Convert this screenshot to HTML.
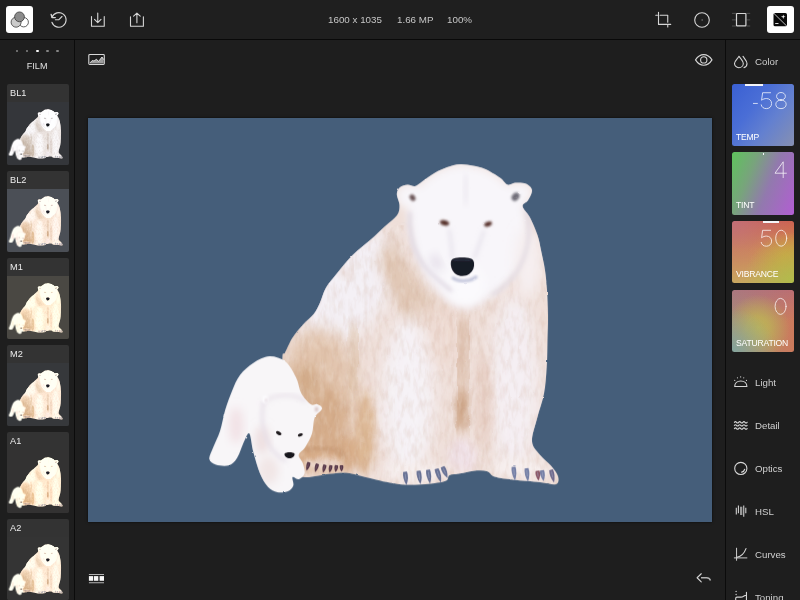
<!DOCTYPE html>
<html>
<head>
<meta charset="utf-8">
<title>Photo Editor</title>
<style>
*{margin:0;padding:0;box-sizing:border-box}
html,body{width:800px;height:600px;overflow:hidden;background:#1e1e1e;font-family:"Liberation Sans",sans-serif;color:#d8d8d8}
.abs{position:absolute}
.info,.nav,#film,.lbl{will-change:transform}
#app{position:relative;width:800px;height:600px;background:#1e1e1e;overflow:hidden}
#topbar{left:0;top:0;width:800px;height:39px;background:#1f1f1f}
#topline{left:0;top:39px;width:800px;height:1px;background:#090909}
#leftline{left:74px;top:40px;width:1px;height:560px;background:#0b0b0b}
#rightline{left:725px;top:40px;width:1px;height:560px;background:#0b0b0b}
.btn-active{background:#fefefe;border-radius:3px;width:27px;height:27px;top:6.25px}
svg{position:absolute;overflow:visible}
.ic{fill:none;stroke:#d6d6d6;stroke-width:1.1;stroke-linecap:round;stroke-linejoin:round}
.info{top:13.3px;font-size:9.8px;color:#c6c6c6;white-space:nowrap;line-height:13px}
#film{left:0;width:74.3px;top:59.65px;text-align:center;font-size:9.1px;color:#e0e0e0;line-height:12px}
.dot{width:2.2px;height:2.2px;border-radius:50%;background:#858585;top:49.9px}
.thumb{left:6.7px;width:62.25px;height:80.6px;background:#333333;border-radius:2px;overflow:hidden}
.thumb .lbl{position:absolute;left:3px;top:3.15px;font-size:9.2px;line-height:12px;color:#ececec}
.thumb .pic{position:absolute;left:0;top:18.3px;width:62.25px;height:62.3px;overflow:hidden}
.thumb .pic svg{left:-17px;top:0;width:96.3px;height:62.3px}
.tile{left:732px;width:62.2px;height:62.4px;border-radius:2.5px;overflow:hidden}
.tile .lbl{position:absolute;left:4.4px;bottom:4.5px;font-size:8.6px;line-height:10px;color:#fff;letter-spacing:-0.2px;white-space:nowrap}
.tile .ind{position:absolute;top:0;height:2px;background:#f4f4f8}
.nav{left:754.700px;font-size:9.7px;color:#cfcfcf;line-height:13px;white-space:nowrap}
#photo{left:88px;top:117.5px;width:624.1px;height:404px;background:#455e7a;box-shadow:0 0 2.5px rgba(0,0,0,.75)}
</style>
</head>
<body>
<div id="app">
<svg width="0" height="0" style="position:absolute"><defs>

<clipPath id="mclip"><path d="M460.0 164.0C464.3 163.8 468.8 164.7 473.0 165.5C477.2 166.3 480.5 166.8 485.0 168.8C489.5 170.8 496.2 174.9 500.0 177.5C503.8 180.1 505.0 183.7 507.5 184.5C510.0 185.3 511.9 182.7 515.0 182.5C518.1 182.3 523.2 182.2 526.0 183.5C528.8 184.8 531.7 187.2 532.0 190.0C532.3 192.8 529.6 197.3 528.0 200.0C526.4 202.7 522.2 203.1 522.5 206.0C522.8 208.9 527.5 212.7 530.0 217.5C532.5 222.3 535.7 229.6 537.5 235.0C539.3 240.4 539.8 244.2 541.0 250.0C542.2 255.8 544.0 263.3 545.0 270.0C546.0 276.7 546.5 282.5 547.0 290.0C547.5 297.5 547.9 306.7 548.0 315.0C548.1 323.3 547.7 331.4 547.5 340.0C547.3 348.6 547.3 357.8 546.7 366.7C546.1 375.6 545.6 384.9 544.0 393.3C542.4 401.7 539.3 409.3 537.3 417.3C535.3 425.3 531.5 435.1 532.0 441.3C532.5 447.5 536.9 450.7 540.0 454.7C543.1 458.7 547.7 461.8 550.7 465.3C553.7 468.9 557.1 472.9 558.0 476.0C558.9 479.1 559.0 483.0 556.0 484.0C553.0 485.0 547.1 482.8 540.0 482.0C532.9 481.2 520.8 480.4 513.3 479.5C505.7 478.6 499.1 477.9 494.7 476.5C490.3 475.1 490.3 472.0 486.7 471.0C483.1 470.0 477.8 470.3 473.3 470.7C468.9 471.1 464.0 472.6 460.0 473.3C456.0 474.0 451.8 473.8 449.5 475.0C447.2 476.2 449.2 479.1 446.0 480.5C442.8 481.9 436.7 482.8 430.0 483.5C423.3 484.2 412.7 484.7 406.0 484.5C399.3 484.3 395.0 483.3 390.0 482.5C385.0 481.7 381.0 480.7 376.0 479.5C371.0 478.3 365.0 476.7 360.0 475.5C355.0 474.3 351.0 472.8 346.0 472.5C341.0 472.2 336.8 472.8 330.0 473.5C323.2 474.2 310.7 477.6 305.0 477.0C299.3 476.4 298.8 476.2 296.0 470.0C293.2 463.8 290.2 451.7 288.0 440.0C285.8 428.3 283.9 413.8 283.0 400.0C282.1 386.2 282.2 365.4 282.5 357.5C282.8 349.6 283.3 355.8 285.0 352.5C286.7 349.2 289.6 342.1 292.5 337.5C295.4 332.9 299.0 329.0 302.5 325.0C306.0 321.0 310.8 317.5 313.8 313.8C316.7 310.0 318.0 306.9 320.0 302.5C322.0 298.1 323.1 292.5 326.0 287.5C328.9 282.5 333.1 277.9 337.5 272.5C341.9 267.1 347.1 260.4 352.5 255.0C357.9 249.6 364.6 244.8 370.0 240.0C375.4 235.2 380.5 230.2 385.0 226.0C389.5 221.8 394.6 218.5 397.0 215.0C399.4 211.5 399.5 208.5 399.5 205.0C399.5 201.5 396.7 196.8 396.8 193.8C396.8 190.8 398.2 188.5 400.0 187.0C401.8 185.5 405.0 184.7 407.5 184.5C410.0 184.3 412.5 186.6 415.0 186.0C417.5 185.4 419.2 183.2 422.5 181.0C425.8 178.8 430.9 174.8 435.0 172.5C439.1 170.2 442.8 168.4 447.0 167.0C451.2 165.6 455.7 164.2 460.0 164.0Z"/></clipPath>
<clipPath id="cclip"><path d="M269.3 356.0C264.0 356.2 258.2 359.6 253.3 362.7C248.4 365.8 243.6 370.0 240.0 374.7C236.4 379.4 234.4 384.9 232.0 390.7C229.6 396.5 227.3 402.6 225.3 409.3C223.3 416.0 222.0 424.5 220.0 430.7C218.0 436.9 215.1 442.0 213.3 446.7C211.5 451.4 208.9 455.7 209.3 458.7C209.8 461.7 212.7 463.4 216.0 464.5C219.3 465.6 225.8 466.2 229.3 465.0C232.9 463.8 234.9 461.2 237.3 457.3C239.8 453.4 242.0 445.3 244.0 441.3C246.0 437.3 247.8 431.5 249.3 433.3C250.9 435.1 251.5 445.3 253.3 452.0C255.1 458.7 257.6 467.5 260.0 473.3C262.4 479.1 265.1 483.6 268.0 486.7C270.9 489.8 274.0 491.3 277.3 492.0C280.6 492.7 285.3 492.1 288.0 491.0C290.7 489.9 292.6 487.6 293.3 485.3C294.1 483.0 291.6 478.1 292.5 477.0C293.4 475.9 296.7 479.6 298.7 479.0C300.7 478.4 303.8 476.0 304.5 473.3C305.2 470.6 303.7 465.8 302.7 462.7C301.7 459.6 298.3 457.4 298.7 454.7C299.1 452.0 303.1 450.3 305.3 446.7C307.5 443.1 310.4 438.2 312.0 433.3C313.6 428.4 313.0 421.4 314.7 417.3C316.4 413.2 321.6 410.7 322.0 408.5C322.4 406.3 319.2 404.8 317.3 404.0C315.4 403.2 313.4 405.8 310.7 404.0C308.0 402.2 303.8 397.8 301.3 393.3C298.9 388.9 298.7 382.6 296.0 377.3C293.3 372.0 289.8 364.9 285.3 361.3C280.9 357.8 274.6 355.8 269.3 356.0Z"/></clipPath>
<filter id="b1" x="-30%" y="-30%" width="160%" height="160%"><feGaussianBlur stdDeviation="0.8"/></filter>
<filter id="b2" x="-30%" y="-30%" width="160%" height="160%"><feGaussianBlur stdDeviation="2"/></filter>
<filter id="b4" x="-30%" y="-30%" width="160%" height="160%"><feGaussianBlur stdDeviation="4"/></filter>
<filter id="b6" x="-40%" y="-40%" width="180%" height="180%"><feGaussianBlur stdDeviation="6"/></filter>
<filter id="b8" x="-40%" y="-40%" width="180%" height="180%"><feGaussianBlur stdDeviation="8"/></filter>
<filter id="b12" x="-50%" y="-50%" width="200%" height="200%"><feGaussianBlur stdDeviation="12"/></filter>
<filter id="fur" x="-3%" y="-3%" width="106%" height="106%">
  <feTurbulence type="fractalNoise" baseFrequency="0.09 0.05" numOctaves="2" seed="7" result="n"/>
  <feDisplacementMap in="SourceGraphic" in2="n" scale="7" xChannelSelector="R" yChannelSelector="G" result="d"/>
  <feGaussianBlur in="d" stdDeviation="0.45"/>
</filter>
<filter id="tex" x="0" y="0" width="100%" height="100%" color-interpolation-filters="sRGB">
  <feTurbulence type="fractalNoise" baseFrequency="0.22 0.07" numOctaves="3" seed="11" result="n"/>
  <feColorMatrix in="n" type="matrix" values="0 0 0 0 0.72  0 0 0 0 0.52  0 0 0 0 0.40  2.6 0 0 0 -1.12" result="c"/>
  <feComposite in="c" in2="SourceGraphic" operator="in"/>
</filter>
<filter id="tex2" x="0" y="0" width="100%" height="100%" color-interpolation-filters="sRGB">
  <feTurbulence type="fractalNoise" baseFrequency="0.2 0.08" numOctaves="3" seed="23" result="n"/>
  <feColorMatrix in="n" type="matrix" values="0 0 0 0 1  0 0 0 0 1  0 0 0 0 1  2.6 0 0 0 -1.15" result="c"/>
  <feComposite in="c" in2="SourceGraphic" operator="in"/>
</filter>
<filter id="edge" x="-3%" y="-3%" width="106%" height="106%">
  <feTurbulence type="fractalNoise" baseFrequency="0.22" numOctaves="1" seed="3" result="n"/>
  <feDisplacementMap in="SourceGraphic" in2="n" scale="2.0" xChannelSelector="R" yChannelSelector="G" result="d"/>
  <feGaussianBlur in="d" stdDeviation="0.55"/>
</filter>
<symbol id="bears" viewBox="88 117.75 624 403.65" preserveAspectRatio="none" overflow="visible">
  <g filter="url(#edge)">
  <path d="M460.0 164.0C464.3 163.8 468.8 164.7 473.0 165.5C477.2 166.3 480.5 166.8 485.0 168.8C489.5 170.8 496.2 174.9 500.0 177.5C503.8 180.1 505.0 183.7 507.5 184.5C510.0 185.3 511.9 182.7 515.0 182.5C518.1 182.3 523.2 182.2 526.0 183.5C528.8 184.8 531.7 187.2 532.0 190.0C532.3 192.8 529.6 197.3 528.0 200.0C526.4 202.7 522.2 203.1 522.5 206.0C522.8 208.9 527.5 212.7 530.0 217.5C532.5 222.3 535.7 229.6 537.5 235.0C539.3 240.4 539.8 244.2 541.0 250.0C542.2 255.8 544.0 263.3 545.0 270.0C546.0 276.7 546.5 282.5 547.0 290.0C547.5 297.5 547.9 306.7 548.0 315.0C548.1 323.3 547.7 331.4 547.5 340.0C547.3 348.6 547.3 357.8 546.7 366.7C546.1 375.6 545.6 384.9 544.0 393.3C542.4 401.7 539.3 409.3 537.3 417.3C535.3 425.3 531.5 435.1 532.0 441.3C532.5 447.5 536.9 450.7 540.0 454.7C543.1 458.7 547.7 461.8 550.7 465.3C553.7 468.9 557.1 472.9 558.0 476.0C558.9 479.1 559.0 483.0 556.0 484.0C553.0 485.0 547.1 482.8 540.0 482.0C532.9 481.2 520.8 480.4 513.3 479.5C505.7 478.6 499.1 477.9 494.7 476.5C490.3 475.1 490.3 472.0 486.7 471.0C483.1 470.0 477.8 470.3 473.3 470.7C468.9 471.1 464.0 472.6 460.0 473.3C456.0 474.0 451.8 473.8 449.5 475.0C447.2 476.2 449.2 479.1 446.0 480.5C442.8 481.9 436.7 482.8 430.0 483.5C423.3 484.2 412.7 484.7 406.0 484.5C399.3 484.3 395.0 483.3 390.0 482.5C385.0 481.7 381.0 480.7 376.0 479.5C371.0 478.3 365.0 476.7 360.0 475.5C355.0 474.3 351.0 472.8 346.0 472.5C341.0 472.2 336.8 472.8 330.0 473.5C323.2 474.2 310.7 477.6 305.0 477.0C299.3 476.4 298.8 476.2 296.0 470.0C293.2 463.8 290.2 451.7 288.0 440.0C285.8 428.3 283.9 413.8 283.0 400.0C282.1 386.2 282.2 365.4 282.5 357.5C282.8 349.6 283.3 355.8 285.0 352.5C286.7 349.2 289.6 342.1 292.5 337.5C295.4 332.9 299.0 329.0 302.5 325.0C306.0 321.0 310.8 317.5 313.8 313.8C316.7 310.0 318.0 306.9 320.0 302.5C322.0 298.1 323.1 292.5 326.0 287.5C328.9 282.5 333.1 277.9 337.5 272.5C341.9 267.1 347.1 260.4 352.5 255.0C357.9 249.6 364.6 244.8 370.0 240.0C375.4 235.2 380.5 230.2 385.0 226.0C389.5 221.8 394.6 218.5 397.0 215.0C399.4 211.5 399.5 208.5 399.5 205.0C399.5 201.5 396.7 196.8 396.8 193.8C396.8 190.8 398.2 188.5 400.0 187.0C401.8 185.5 405.0 184.7 407.5 184.5C410.0 184.3 412.5 186.6 415.0 186.0C417.5 185.4 419.2 183.2 422.5 181.0C425.8 178.8 430.9 174.8 435.0 172.5C439.1 170.2 442.8 168.4 447.0 167.0C451.2 165.6 455.7 164.2 460.0 164.0Z" fill="#efdfd9"/>
  <g clip-path="url(#mclip)">
   <g filter="url(#fur)">
    <!-- shoulder / back white -->
    <ellipse cx="350" cy="290" rx="37" ry="68" fill="#f4f0f5" filter="url(#b8)" transform="rotate(38 350 290)"/>
    <ellipse cx="347" cy="273" rx="6" ry="5" fill="#e8d8d4" filter="url(#b4)"/>
    <!-- thigh tan -->
    <ellipse cx="318" cy="398" rx="40" ry="70" fill="#e2c5ae" filter="url(#b8)"/>
    <ellipse cx="306" cy="385" rx="12" ry="22" fill="#d4ae8c" filter="url(#b6)"/>
    <ellipse cx="328" cy="452" rx="44" ry="20" fill="#d8ae8a" filter="url(#b6)"/>
    <path d="M352 326C358 345 357 365 350 392" stroke="#d9bb9e" stroke-width="5" fill="none" filter="url(#b4)"/>
    <ellipse cx="326" cy="420" rx="20" ry="34" fill="#d6ae8c" filter="url(#b6)"/>
    <path d="M303 452C312 446 334 447 346 458" stroke="#c89a74" stroke-width="4" fill="none" filter="url(#b2)"/>
    <ellipse cx="324" cy="464" rx="20" ry="6" fill="#ecd6c8" filter="url(#b2)"/>
    <!-- neck cream -->
    <path d="M394 232C402 262 422 292 450 312L430 336C402 322 384 290 378 256Z" fill="#e1c8b6" filter="url(#b6)"/>
    <!-- chest -->
    <ellipse cx="440" cy="335" rx="26" ry="34" fill="#eedad2" filter="url(#b8)"/>
    <!-- left front leg white -->
    <ellipse cx="408" cy="398" rx="26" ry="82" fill="#f6f2f6" filter="url(#b8)"/>
    <ellipse cx="365" cy="432" rx="9" ry="42" fill="#ddb894" filter="url(#b4)"/>
    <!-- center seam tan -->
    <path d="M466 318C460 350 458 390 462 432" stroke="#dfc2b0" stroke-width="16" fill="none" filter="url(#b6)"/>
    <ellipse cx="462" cy="408" rx="6" ry="18" fill="#cda586" filter="url(#b4)"/>
    <ellipse cx="462" cy="455" rx="14" ry="16" fill="#f1e2e8" filter="url(#b4)"/>
    <!-- right leg -->
    <ellipse cx="514" cy="385" rx="24" ry="92" fill="#f5eff3" filter="url(#b8)"/>
    <ellipse cx="484" cy="400" rx="8" ry="50" fill="#e8d0c6" filter="url(#b4)"/>
    <!-- paws lighter -->
    <ellipse cx="415" cy="472" rx="32" ry="10" fill="#f7efee" filter="url(#b4)"/>
    <ellipse cx="522" cy="468" rx="32" ry="11" fill="#f7efee" filter="url(#b4)"/>
   </g>
    <!-- fur texture -->
    <rect x="280" y="225" width="280" height="262" fill="#000" filter="url(#tex)" opacity=".13"/>
    <rect x="280" y="225" width="280" height="262" fill="#000" filter="url(#tex2)" opacity=".16"/>
    <!-- head -->
    <path d="M414 210C410 240 424 274 448 294C458 306 474 306 484 294C512 276 532 244 528 210Z" fill="none" stroke="#e3d8dc" stroke-width="6" filter="url(#b4)"/>
    <path d="M396 196C394 186 410 180 418 186C432 170 452 163 466 164C488 166 502 178 508 185C518 180 534 182 532 192C532 200 524 204 523 207C530 226 530 250 516 272C506 288 490 296 484 300C476 308 456 308 448 300C430 288 414 262 410 232C408 222 408 214 408 208C400 208 396 202 396 196Z" fill="#f8f6fa" filter="url(#b4)"/>
    <ellipse cx="465" cy="284" rx="20" ry="22" fill="#fbfafd" filter="url(#b4)"/>
    <!-- right shoulder white -->
    <ellipse cx="528" cy="262" rx="14" ry="36" fill="#f6eff0" filter="url(#b6)"/>
    <!-- cheek contours -->
    <path d="M410 212C408 236 416 258 430 272C438 280 446 286 452 291" stroke="#ddd5e0" stroke-width="3" fill="none" filter="url(#b2)"/>
    <path d="M527 212C531 232 528 252 518 270C510 282 500 290 492 295" stroke="#e0d8e0" stroke-width="3" fill="none" filter="url(#b2)"/>
    <path d="M449 229C451 240 451.500 250 452.500 258M484 230C481 240 477 250 474 258" stroke="#e7e3ec" stroke-width="3" fill="none" filter="url(#b2)"/>
    <ellipse cx="465.500" cy="189" rx="1.600" ry="17" fill="#ece8f0" filter="url(#b2)"/>
    <!-- mouth shadow -->
    <path d="M452 277C458 282 470 282 477 276" stroke="#c3c6dc" stroke-width="3" fill="none" filter="url(#b1)"/>
    <ellipse cx="436" cy="262" rx="5" ry="9" fill="#e6e0ea" filter="url(#b4)" transform="rotate(-25 436 262)"/>
  </g>
  <!-- ears -->
  <ellipse cx="412.500" cy="197.500" rx="2.6" ry="3.4" fill="#6b5556" filter="url(#b1)" transform="rotate(-35 412.5 197.5)"/>
  <ellipse cx="515.500" cy="196.500" rx="3.4" ry="4.6" fill="#6f6d78" filter="url(#b1)" transform="rotate(40 515.5 196.5)"/>
  <!-- eyes -->
  <ellipse cx="444.500" cy="222.600" rx="4.6" ry="2.7" fill="#56302a" transform="rotate(14 444.5 222.6)" filter="url(#b1)"/>
  <ellipse cx="488" cy="223.800" rx="4.000" ry="2.4" fill="#56302a" transform="rotate(-20 488 223.8)" filter="url(#b1)"/>
  <!-- nose -->
  <path d="M450.800 262.500C451 258 455 257.300 462 257.300C469 257.300 473.500 258 474 262.500C474.500 267 473 271 469.500 273.500C466 276.300 459.500 276.500 456 274C452.500 271.500 450.500 267 450.800 262.500Z" fill="#191b27"/>
  <path d="M454 260.500C458 259 466 259 470.500 260.500" stroke="#3b4258" stroke-width="1.400" fill="none" filter="url(#b1)"/>
  <path d="M307.6 461.6Q305.4 465.1 306.5 470.5Q310.4 466.6 310.4 462.4Z" fill="#553648"/><path d="M308.6 463.3L307.5 467.1" stroke="#8a6a78" stroke-width="0.7" opacity=".7"/><path d="M316.1 463.1Q313.9 466.6 315.0 472.0Q318.9 468.1 318.9 463.9Z" fill="#553648"/><path d="M317.1 464.8L316.0 468.6" stroke="#8a6a78" stroke-width="0.7" opacity=".7"/><path d="M323.6 464.1Q321.6 467.5 323.0 472.5Q326.6 468.7 326.4 464.9Z" fill="#553648"/><path d="M324.7 465.7L323.8 469.3" stroke="#8a6a78" stroke-width="0.7" opacity=".7"/><path d="M329.6 464.7Q327.8 467.9 329.5 472.5Q332.9 468.9 332.4 465.3Z" fill="#553648"/><path d="M330.8 466.1L330.1 469.5" stroke="#8a6a78" stroke-width="0.7" opacity=".7"/><path d="M335.0 464.8Q333.5 467.8 335.5 472.0Q338.6 468.5 338.0 465.2Z" fill="#553648"/><path d="M336.4 466.1L335.9 469.2" stroke="#8a6a78" stroke-width="0.7" opacity=".7"/><path d="M340.0 465.0Q338.9 467.9 341.5 471.5Q344.1 467.9 343.0 465.0Z" fill="#553648"/><path d="M341.5 466.0L341.5 468.9" stroke="#8a6a78" stroke-width="0.7" opacity=".7"/><path d="M403.1 471.7Q402.2 478.0 406.5 485.0Q409.2 477.2 406.9 471.3Z" fill="#687194"/><path d="M405.2 473.5L405.9 479.6" stroke="#a9b2cc" stroke-width="0.7" opacity=".7"/><path d="M416.6 470.8Q415.9 477.1 420.5 484.0Q422.9 476.1 420.4 470.2Z" fill="#687194"/><path d="M418.8 472.5L419.7 478.6" stroke="#a9b2cc" stroke-width="0.7" opacity=".7"/><path d="M426.1 469.8Q425.4 476.3 430.0 483.5Q432.4 475.3 429.9 469.2Z" fill="#687194"/><path d="M428.3 471.6L429.2 477.9" stroke="#a9b2cc" stroke-width="0.7" opacity=".7"/><path d="M434.6 469.1Q435.2 475.9 441.0 482.5Q441.9 473.7 438.4 467.9Z" fill="#687194"/><path d="M437.2 470.6L439.2 476.9" stroke="#a9b2cc" stroke-width="0.7" opacity=".7"/><path d="M440.7 467.3Q441.5 473.1 447.5 478.0Q448.0 470.3 444.3 465.7Z" fill="#687194"/><path d="M443.2 468.2L445.5 473.4" stroke="#a9b2cc" stroke-width="0.7" opacity=".7"/><path d="M511.6 466.7Q510.8 473.2 515.0 480.5Q517.5 472.4 515.4 466.3Z" fill="#7680a6"/><path d="M513.7 468.6L514.4 474.9" stroke="#a9b2cc" stroke-width="0.7" opacity=".7"/><path d="M524.6 468.2Q523.8 474.4 528.0 481.5Q530.5 473.7 528.4 467.8Z" fill="#7680a6"/><path d="M526.7 470.0L527.4 476.1" stroke="#a9b2cc" stroke-width="0.7" opacity=".7"/><path d="M535.6 470.7Q534.6 475.3 538.5 480.5Q541.3 474.7 539.4 470.3Z" fill="#8a5565"/><path d="M537.6 472.0L538.1 476.5" stroke="#a9b2cc" stroke-width="0.7" opacity=".7"/><path d="M540.1 470.3Q539.3 475.4 543.5 481.0Q546.0 474.5 543.9 469.7Z" fill="#7680a6"/><path d="M542.2 471.6L542.9 476.6" stroke="#a9b2cc" stroke-width="0.7" opacity=".7"/><path d="M549.2 469.9Q549.1 476.1 554.0 482.5Q555.6 474.6 552.8 469.1Z" fill="#6f6a8c"/><path d="M551.5 471.4L552.8 477.3" stroke="#a9b2cc" stroke-width="0.7" opacity=".7"/>
  <!-- cub -->
  <path d="M269.3 356.0C264.0 356.2 258.2 359.6 253.3 362.7C248.4 365.8 243.6 370.0 240.0 374.7C236.4 379.4 234.4 384.9 232.0 390.7C229.6 396.5 227.3 402.6 225.3 409.3C223.3 416.0 222.0 424.5 220.0 430.7C218.0 436.9 215.1 442.0 213.3 446.7C211.5 451.4 208.9 455.7 209.3 458.7C209.8 461.7 212.7 463.4 216.0 464.5C219.3 465.6 225.8 466.2 229.3 465.0C232.9 463.8 234.9 461.2 237.3 457.3C239.8 453.4 242.0 445.3 244.0 441.3C246.0 437.3 247.8 431.5 249.3 433.3C250.9 435.1 251.5 445.3 253.3 452.0C255.1 458.7 257.6 467.5 260.0 473.3C262.4 479.1 265.1 483.6 268.0 486.7C270.9 489.8 274.0 491.3 277.3 492.0C280.6 492.7 285.3 492.1 288.0 491.0C290.7 489.9 292.6 487.6 293.3 485.3C294.1 483.0 291.6 478.1 292.5 477.0C293.4 475.9 296.7 479.6 298.7 479.0C300.7 478.4 303.8 476.0 304.5 473.3C305.2 470.6 303.7 465.8 302.7 462.7C301.7 459.6 298.3 457.4 298.7 454.7C299.1 452.0 303.1 450.3 305.3 446.7C307.5 443.1 310.4 438.2 312.0 433.3C313.6 428.4 313.0 421.4 314.7 417.3C316.4 413.2 321.6 410.7 322.0 408.5C322.4 406.3 319.2 404.8 317.3 404.0C315.4 403.2 313.4 405.8 310.7 404.0C308.0 402.2 303.8 397.8 301.3 393.3C298.9 388.9 298.7 382.6 296.0 377.3C293.3 372.0 289.8 364.9 285.3 361.3C280.9 357.8 274.6 355.8 269.3 356.0Z" fill="#f8f6f8"/>
  <g clip-path="url(#cclip)">
    <ellipse cx="236" cy="425" rx="7" ry="18" fill="#f2e2e6" filter="url(#b4)"/>
    <ellipse cx="262" cy="440" rx="7" ry="14" fill="#eedfe0" filter="url(#b4)"/>
    <ellipse cx="268" cy="470" rx="10" ry="14" fill="#f1e6e6" filter="url(#b4)"/>
    <path d="M264 402C260 414 262 432 270 446C274 452 280 458 286 461" stroke="#e6dfe8" stroke-width="3" fill="none" filter="url(#b2)"/>
    <path d="M262 404C270 395 290 391 306 401" stroke="#e9e2ea" stroke-width="3" fill="none" filter="url(#b2)"/>
    <ellipse cx="265" cy="399" rx="3" ry="4" fill="#fdfcfe" filter="url(#b1)"/>
    <ellipse cx="266" cy="400" rx="1.2" ry="1.8" fill="#e2d6dc" filter="url(#b1)"/>
  </g>
  <ellipse cx="316.500" cy="409" rx="1.8" ry="2.6" fill="#d8c4c4" filter="url(#b1)"/>
  <ellipse cx="278.700" cy="432.900" rx="3.0" ry="1.7" fill="#1f1a1e" transform="rotate(28 278.7 432.9)"/>
  <ellipse cx="300.300" cy="434.700" rx="2.600" ry="1.5" fill="#1f1a1e" transform="rotate(-22 300.3 434.7)"/>
  <path d="M284.500 453.500C286 451.500 293 451.500 294.500 453.500C295 456 292 458 289.500 458C287 458 284 456 284.500 453.500Z" fill="#17141a"/>
  </g>
</symbol>

</defs></svg>

<!-- ===== TOP BAR ===== -->
<div id="topbar" class="abs"></div>
<div id="topline" class="abs"></div>
<div id="leftline" class="abs"></div>
<div id="rightline" class="abs"></div>

<div class="abs btn-active" style="left:6.250px"></div>
<!-- presets icon (3 circles) -->
<svg class="abs" style="left:6.250px;top:6.250px" width="27" height="27" viewBox="0 0 27 27">
  <circle cx="17.700" cy="16.200" r="4.700" fill="#ffffff" stroke="#3a3a3a" stroke-width="0.8"/>
  <circle cx="10.100" cy="16.200" r="5.000" fill="#cbcbcb" stroke="#3a3a3a" stroke-width="0.8"/>
  <circle cx="13.500" cy="10.850" r="4.900" fill="#8b8b8b" stroke="#3a3a3a" stroke-width="0.8"/>
</svg>
<!-- history -->
<svg class="abs ic" style="left:48px;top:10px" width="20" height="20" viewBox="0 0 20 20">
  <path d="M3.900 12.300A7.300 7.300 0 1 0 4.000 7.300"/>
  <path d="M3.100 4.300L4 7.500L7.300 7.600" stroke-width="1.3"/>
  <path d="M7.400 9.800H10.700L14 6.500"/>
</svg>
<!-- download -->
<svg class="abs ic" style="left:88px;top:10px" width="20" height="20" viewBox="0 0 20 20">
  <path d="M3.500 6.500V16.250H16.250V6.500"/>
  <path d="M9.750 3V12.600M6.500 9.300L9.750 12.700L13 9.300"/>
</svg>
<!-- share -->
<svg class="abs ic" style="left:127px;top:10px" width="20" height="20" viewBox="0 0 20 20">
  <path d="M3.500 6.750V16.250H16.400V6.750"/>
  <path d="M9.900 12.750V3.300M6.600 6.200L9.900 3.100L13.200 6.200"/>
</svg>

<div class="abs info" style="left:328px">1600 x 1035</div>
<div class="abs info" style="left:397px">1.66 MP</div>
<div class="abs info" style="left:447.200px">100%</div>

<!-- crop -->
<svg class="abs ic" style="left:653px;top:10px" width="20" height="20" viewBox="0 0 20 20">
  <path d="M5.500 2.300V14.400H17.700"/>
  <path d="M2.800 5.250H4.400M7.100 5.250H14.750V12.300M14.750 15.300V17"/>
</svg>
<!-- circle -->
<svg class="abs ic" style="left:692px;top:10px" width="20" height="20" viewBox="0 0 20 20">
  <circle cx="10" cy="10" r="7.300"/>
  <circle cx="10" cy="10" r="0.4" stroke-width="0.5" opacity=".5"/>
</svg>
<!-- perspective / rect -->
<svg class="abs ic" style="left:731px;top:10px" width="20" height="20" viewBox="0 0 20 20">
  <rect x="5.500" y="3.500" width="9.400" height="12.350" rx="0.6" stroke-width="1.2"/>
  <path d="M1.300 3.400H4.500M1.300 9.900H4.500M1.300 16H4.500M16 3.400H18.800M16 9.900H18.800M16 16H18.800" stroke-width="0.9" opacity=".3"/>
</svg>
<div class="abs btn-active" style="left:766.850px;width:27.2px"></div>
<svg class="abs" style="left:767px;top:6px" width="27" height="27" viewBox="0 0 27 27">
  <rect x="6.500" y="7" width="13.500" height="13.250" rx="1.600" fill="#080808"/>
  <path d="M6.900 7.400L19.700 20" stroke="#e8e8e8" stroke-width="0.8" fill="none"/>
  <path d="M16.250 8.400L16.800 10.200L18.600 10.750L16.800 11.300L16.250 13.100L15.700 11.300L13.900 10.750L15.700 10.200Z" fill="#fff"/>
  <path d="M8.200 17.500H11.500" stroke="#ddd" stroke-width="1" fill="none"/>
</svg>

<!-- ===== LEFT SIDEBAR ===== -->
<div class="abs dot" style="left:16.200px"></div>
<div class="abs dot" style="left:26.200px"></div>
<div class="abs dot" style="left:36.050px;top:49.700px;width:2.6px;height:2.6px;background:#f6f6f6"></div>
<div class="abs dot" style="left:46.350px"></div>
<div class="abs dot" style="left:56.400px"></div>
<div id="film" class="abs">FILM</div>

<div class="abs thumb" style="top:84.200px"><div class="lbl">BL1</div><div class="pic" style="background:#34363a"><svg style="filter:saturate(.4) contrast(1.06)" viewBox="88 117.75 624 403.65"><use href="#bears" x="88" y="117.75" width="624" height="403.65"/></svg></div></div>
<div class="abs thumb" style="top:171.200px"><div class="lbl">BL2</div><div class="pic" style="background:#4b4f56"><svg style="filter:sepia(.18)" viewBox="88 117.75 624 403.65"><use href="#bears" x="88" y="117.75" width="624" height="403.65"/></svg></div></div>
<div class="abs thumb" style="top:258.200px"><div class="lbl">M1</div><div class="pic" style="background:#4a4843"><svg style="filter:sepia(.38)" viewBox="88 117.75 624 403.65"><use href="#bears" x="88" y="117.75" width="624" height="403.65"/></svg></div></div>
<div class="abs thumb" style="top:345.200px"><div class="lbl">M2</div><div class="pic" style="background:#36383b"><svg style="filter:sepia(.25)" viewBox="88 117.75 624 403.65"><use href="#bears" x="88" y="117.75" width="624" height="403.65"/></svg></div></div>
<div class="abs thumb" style="top:432.200px"><div class="lbl">A1</div><div class="pic" style="background:#333232"><svg style="filter:sepia(.32) saturate(1.15)" viewBox="88 117.75 624 403.65"><use href="#bears" x="88" y="117.75" width="624" height="403.65"/></svg></div></div>
<div class="abs thumb" style="top:519.200px"><div class="lbl">A2</div><div class="pic" style="background:#343434"><svg style="filter:sepia(.28)" viewBox="88 117.75 624 403.65"><use href="#bears" x="88" y="117.75" width="624" height="403.65"/></svg></div></div>

<!-- ===== MAIN ===== -->
<!-- histogram icon -->
<svg class="abs" style="left:88px;top:53px" width="18" height="13" viewBox="0 0 18 13">
  <rect x="0.800" y="1.550" width="15.500" height="9.900" rx="0.900" fill="none" stroke="#d8d8d8" stroke-width="1.1"/>
  <path d="M2 9.900L4.250 7.500L6 8L8.500 6.250L10.500 8.500L14 4L15.700 6.600V10.500H2Z" fill="#9c9c9c"/>
  <path d="M2 9.900L4.250 7.500L6 8L8.500 6.250L10.500 8.500L14 4L15.700 6.600" fill="none" stroke="#e6e6e6" stroke-width="0.9" stroke-linejoin="round"/>
</svg>
<!-- eye -->
<svg class="abs ic" style="left:694px;top:53px" width="20" height="14" viewBox="0 0 20 14">
  <path d="M1.500 6.900C3.800 3.300 6.600 1.600 9.750 1.600S15.700 3.300 18 6.900C15.700 10.500 12.900 12.200 9.750 12.200S3.800 10.500 1.500 6.900Z"/>
  <circle cx="9.750" cy="6.900" r="3.150"/>
</svg>

<div id="photo" class="abs">
  <svg style="left:0;top:0.25px" width="624" height="403.65" viewBox="88 117.75 624 403.65"><use href="#bears" x="88" y="117.750" width="624" height="403.65"/></svg>
</div>

<!-- filmstrip icon -->
<svg class="abs" style="left:88px;top:572px" width="18" height="13" viewBox="0 0 18 13">
  <path d="M0.900 2.500H16M0.900 10.750H16" stroke="#c4c4c4" stroke-width="0.9" fill="none"/>
  <rect x="0.900" y="4.100" width="4.300" height="4.700" fill="#f8f8f8"/>
  <rect x="6" y="4.100" width="4.300" height="4.700" fill="#f8f8f8"/>
  <rect x="11.600" y="4.100" width="4.400" height="4.700" fill="#f8f8f8"/>
</svg>
<!-- back arrow -->
<svg class="abs ic" style="left:695px;top:571px" width="18" height="14" viewBox="0 0 18 14">
  <path d="M6.250 2.750L2.100 6.750L6.250 10.900"/>
  <path d="M6 6.750H11.600C13.600 6.750 14.800 7.800 15.500 9.600" stroke="#b2b2b2" stroke-width="1.4" stroke-linecap="butt"/>
</svg>

<!-- ===== RIGHT PANEL ===== -->
<svg class="abs ic" style="left:733px;top:54px" width="17" height="15" viewBox="0 0 17 15">
  <path d="M6 2.300C4.400 5 1.500 7 1.500 9.400A4.400 4.300 0 0 0 10.300 9.400C10.300 7 7.600 5 6 2.300Z"/>
  <path d="M10 2.400C11.800 5 14 7 14 9.400C14 11.600 12.800 13.100 11 13.600"/>
</svg>
<div class="abs nav" style="top:55.250px">Color</div>

<div class="abs tile" style="top:84px;background:linear-gradient(128deg,#3a60d3 0%,#4a6ed6 35%,#6380d0 62%,#8690b2 100%)">
  <div class="ind" style="left:12.900px;width:18.200px"></div>
  <div class="lbl">TEMP</div>
</div>
<div class="abs tile" style="top:152.400px;background:linear-gradient(112deg,#5ec35c 0%,#78a47c 30%,#9279ae 58%,#b25ed2 100%)">
  <div class="ind" style="left:31.200px;width:1px;top:1px"></div>
  <div class="lbl">TINT</div>
</div>
<div class="abs tile" style="top:221px;background:radial-gradient(ellipse at 100% 100%,#b0bc4a 0%,rgba(180,188,74,0) 58%),radial-gradient(ellipse at 0% 0%,rgba(190,116,136,.7) 0%,rgba(190,116,136,0) 72%),radial-gradient(ellipse at 85% 55%,rgba(214,166,64,.6) 0%,rgba(214,166,64,0) 50%),linear-gradient(to bottom,#cc6250 0%,#d08c4e 48%,#c8a860 100%)">
  <div class="ind" style="left:31px;width:16px"></div>
  <div class="lbl">VIBRANCE</div>
</div>
<div class="abs tile" style="top:289.800px;background:radial-gradient(ellipse at 0% 100%,#84a69e 0%,rgba(132,166,158,0) 50%),radial-gradient(ellipse at 42% 62%,#beb256 0%,rgba(190,178,86,.8) 22%,rgba(190,178,86,0) 62%),linear-gradient(to bottom,rgba(172,100,134,.55) 0%,rgba(172,100,134,0) 50%),linear-gradient(to right,#a88e78 0%,#cc7a5c 100%)">
  <div class="lbl">SATURATION</div>
</div>

<!-- thin digits -->
<svg class="abs" style="left:732px;top:84px" width="62.200" height="270" viewBox="0 0 62.2 270" fill="none" stroke="#fff" stroke-width="0.85" stroke-linecap="round" stroke-linejoin="round" opacity=".88">
  <!-- -58 -->
  <path d="M21.400 19.400H25.400"/>
  <path d="M38.600 8.700H30.600L29.600 16.200C31.200 15 32.800 14.500 34.400 14.500C37.600 14.500 39.600 16.600 39.600 19.500C39.600 22.600 37.400 24.600 34.400 24.600C31.600 24.600 29.600 23.100 29.200 20.800"/>
  <path d="M49 16C46.400 16 44.600 14.500 44.600 12.300C44.600 10.100 46.400 8.500 49 8.500S53.400 10.100 53.400 12.300C53.400 14.500 51.600 16 49 16ZM49 16C46 16 43.800 17.700 43.800 20.300S46 24.600 49 24.600S54.200 22.900 54.200 20.300S52 16 49 16Z"/>
  <!-- 4 -->
  <path d="M51.200 93.600V77.800L43 89.200H54.400" transform="translate(0,0)"/>
  <!-- 50 -->
  <path d="M38.600 146.300H30.600L29.600 153.800C31.200 152.600 32.800 152.100 34.400 152.100C37.600 152.100 39.600 154.200 39.600 157.100C39.600 160.200 37.400 162.200 34.400 162.200C31.600 162.200 29.600 160.700 29.200 158.400"/>
  <ellipse cx="49.200" cy="154.200" rx="5.500" ry="8"/>
  <!-- 0 -->
  <ellipse cx="48.600" cy="222.400" rx="5.500" ry="8"/>
</svg>

<svg class="abs ic" style="left:733px;top:375px" width="17" height="14" viewBox="0 0 17 14">
  <path d="M1.700 11.500C1.700 8 4.400 6 7.800 6S13.900 8 13.900 11.500Z"/>
  <path d="M1.750 5.400v.1M4.450 2.750v.1M7.650 1.800v.1M10.750 2.750v.1M13.450 5.400v.1" stroke-width="1.15"/>
</svg>
<div class="abs nav" style="top:375.950px">Light</div>

<svg class="abs ic" style="left:733px;top:419px" width="17" height="12" viewBox="0 0 17 12">
  <path d="M1.400 3.300q1.060-1.300 2.120 0t2.120 0t2.120 0t2.120 0t2.120 0t2.120 0"/>
  <path d="M1.400 6.400q1.060-1.300 2.120 0t2.120 0t2.120 0t2.120 0t2.120 0t2.120 0"/>
  <path d="M1.400 9.550q1.060-1.300 2.120 0t2.120 0t2.120 0t2.120 0t2.120 0t2.120 0"/>
</svg>
<div class="abs nav" style="top:418.650px">Detail</div>

<svg class="abs ic" style="left:733px;top:460px" width="17" height="16" viewBox="0 0 17 16">
  <circle cx="7.800" cy="8.450" r="6.100"/>
  <path d="M11.650 9.350A3.950 3.950 0 0 1 8.700 12.200" stroke-width="1.3"/>
</svg>
<div class="abs nav" style="top:462.200px">Optics</div>

<svg class="abs ic" style="left:733px;top:503px" width="17" height="16" viewBox="0 0 17 16">
  <path d="M3.300 4.700V11.500M5.400 2.500V10.200M10.750 2.500V13.700M12.800 4.700V10.200" stroke-width="1.05" stroke-linecap="butt"/>
  <path d="M8.150 3.700V12" stroke-width="2.300" stroke="#9a9a9a" stroke-linecap="butt"/>
</svg>
<div class="abs nav" style="top:504.750px">HSL</div>

<svg class="abs ic" style="left:733px;top:546px" width="17" height="16" viewBox="0 0 17 16">
  <path d="M3.550 2.200V14.300M1.300 11.900H13.900" stroke-width="0.95"/>
  <path d="M4 11.300C8.500 10.300 11.200 7.500 13 2.600"/>
</svg>
<div class="abs nav" style="top:548.200px">Curves</div>

<svg class="abs ic" style="left:733px;top:589px" width="17" height="16" viewBox="0 0 17 16">
  <path d="M3.100 2.300v.1M3.100 5.450v.1" stroke-width="1.3"/>
  <path d="M2.700 11V9.300C2.700 8.500 3.200 8.150 4 8.150H8C10.600 8.150 10.600 6.200 13.400 6.200M13.450 3.200V11.500"/>
</svg>
<div class="abs nav" style="top:591.250px">Toning</div>

</div>
</body>
</html>
